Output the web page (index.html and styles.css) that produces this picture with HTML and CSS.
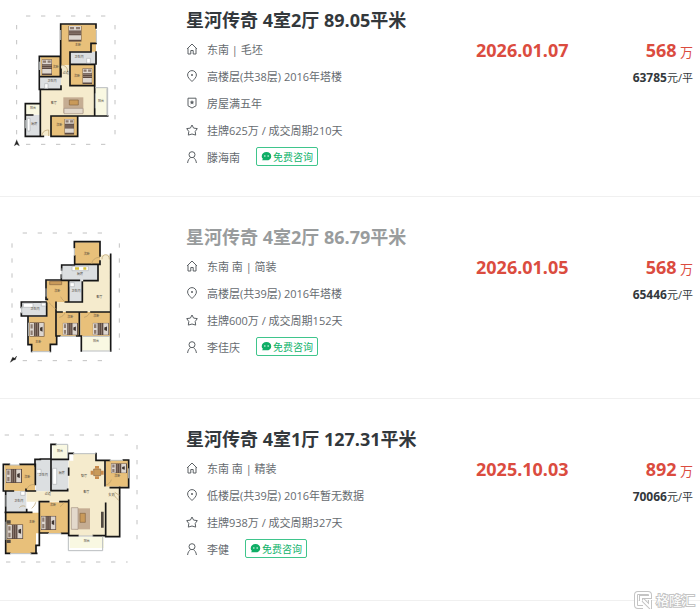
FILE: index.html
```html
<!doctype html>
<html lang="zh-CN">
    <head>
        <meta charset="utf-8" />
        <title>星河传奇 成交记录</title>
        <link rel="stylesheet" href="styles.css">
    </head>
    <body>
        <!-- Shared icons and furniture -->
        <svg class="sprites" aria-hidden="true">
            <symbol id="icon-home" viewBox="0 0 12 12">
                <path d="M1 6 6 1l5 5M2 5.3V11h2.8V7.5h2.4V11H10V5.3" />
            </symbol>
            <symbol id="icon-pin" viewBox="0 0 12 12">
                <path d="M6 11.5C3.5 9 1.6 7.3 1.6 5a4.4 4.4 0 0 1 8.8 0c0 2.3-1.9 4-4.4 6.5z" />
                <circle class="dot" cx="6" cy="5" r="1" />
            </symbol>
            <symbol id="icon-badge" viewBox="0 0 12 12">
                <path d="M2 1.2h8v7.6L6 11 2 8.8z" />
                <path class="dot" d="M6 3l.7 1.5 1.6.2-1.2 1.1.3 1.6L6 6.6l-1.4.8.3-1.6-1.2-1.1 1.6-.2z" />
            </symbol>
            <symbol id="icon-star" viewBox="0 0 12 12">
                <path d="M6 1l1.6 3.1 3.7.5-2.1 2.9.5 3.6L6 10l-3.7 1.1.5-3.6L.7 4.6l3.7-.5z" />
            </symbol>
            <symbol id="icon-user" viewBox="0 0 12 12">
                <circle cx="6" cy="3.7" r="3" />
                <path d="M1.6 12c.2-2.8 1.6-4.5 3-5.4M10.4 12c-.2-2.8-1.6-4.5-3-5.4" />
            </symbol>
            <symbol id="icon-chat" viewBox="0 0 12 12">
                <path d="M6 1c3 0 5.200 2 5.200 4.600S9 10.200 6 10.200H1.200l.9-1.800C1.200 7.700.8 6.700.8 5.600.8 3 3 1 6 1z" />
                <circle class="eye" cx="4.200" cy="5.500" r=".8" />
                <circle class="eye" cx="7.800" cy="5.500" r=".8" />
            </symbol>
            <symbol id="bed" viewBox="0 0 40 50" preserveAspectRatio="none">
                <path fill="#5c4a42" d="M0 0h40v50H0z" />
                <path fill="#ddd6cf" d="M2 1h36v14H2zM2 30h36v14H2z" />
                <path fill="#8d7b70" d="M2 18h36v3H2zM2 24h36v3H2zM5 4h12v7H5zM23 4h12v7H23z" />
            </symbol>
            <symbol id="bed-side" viewBox="0 0 50 40" preserveAspectRatio="none">
                <path fill="#5c4a42" d="M0 0h50v40H0z" />
                <path fill="#ddd6cf" d="M1 2h14v36H1zM32 2h15v36H32z" />
                <path fill="#8d7b70" d="M18 2h3v36h-3zM25 2h3v36h-3zM4 5h7v12H4zM4 23h7v12H4z" />
                <path fill="#3d332f" d="M35 15l8-3v14l-8-3z" />
            </symbol>
        </svg>

        <ul class="deal-list">
            <li class="deal">
                <svg class="plan" viewBox="0 15 450 450" role="img" aria-label="户型图">
                    <path class="ruler" d="M78 48h240M78 433h240M50 75v340M345 75v330" />
                    <path class="wood" d="M182 73h106v82h-78v40h-28zM122 170h61v60h-61zM210 195h76v63h-76zM153 348h80v60h-80z" />
                    <path class="tile" d="M210 156h76v36h-76zM122 230h61v38h-61zM77 344h43v64H77z" />
                    <path class="hall" d="M183 195h27v62h75v90H153v60h-32V268h62z" />
                    <path class="balcony" d="M77 312h43v32H77zM286 263h37v84h-37z" />
                    <path class="wall" d="M288 84V72H182v123M288 130h-15v26h-63v37M288 156v36M118 229v-60h63v61M118 230v38h65v-10M210 193h74v152M210 197v60h74M121 270v76M121 311H76v98h54M153 409h80v-60M121 347v60M78 345h20M153 348h170M153 349v58M183 208v22h-61" />
                    <path class="pane" d="M182 90v30M289 90v38M118 185v25M286 263h37v84M286 280v45M76 360v25M321 265v80" />
                    <path class="door" d="M126 408c0-13 10-18 20-18v18M183 195c12 0 20 8 20 20" />
                    <use href="#bed" x="205" y="77" width="40" height="48" />
                    <use href="#bed" x="125" y="178" width="31" height="48" />
                    <use href="#bed" x="247" y="205" width="30" height="48" />
                    <use href="#bed" x="193" y="357" width="30" height="47" />
                    <path class="rug" d="M190 292h60v47h-60z" />
                    <path class="sofa" d="M192 325h57v16h-57z" />
                    <path class="desk" d="M208 300h27v15h-27z" />
                    <path class="fixture" d="M260 175h11v14h-11zM134 251h10v14h-10zM82 355h8v38h-8z" />
                    <g class="room">
                        <text x="234" y="138">主卧</text>
                        <text x="237" y="173">卫生间</text>
                        <text x="167" y="203">次卧</text>
                        <text x="231" y="232">次卧</text>
                        <text x="197" y="223">过道</text>
                        <text x="156" y="246">卫生间</text>
                        <text x="161" y="311">客厅</text>
                        <text x="303" y="305">阳台</text>
                        <text x="99" y="327">阳台</text>
                        <text x="103" y="374">厨房</text>
                        <text x="178" y="378">次卧</text>
                    </g>
                    <path class="compass" d="M50 418v8M50 421l-7 16 7-4 8 4z" />
                </svg>
                <div class="info">
                    <h2><a href="#">星河传奇 4室2厅 89.05平米</a></h2>
                    <p><svg class="icon"><use href="#icon-home" /></svg>东南 | 毛坯</p>
                    <p><svg class="icon"><use href="#icon-pin" /></svg>高楼层(共38层) 2016年塔楼</p>
                    <p><svg class="icon"><use href="#icon-badge" /></svg>房屋满五年</p>
                    <p><svg class="icon"><use href="#icon-star" /></svg>挂牌625万 / 成交周期210天</p>
                    <p>
                        <svg class="icon"><use href="#icon-user" /></svg>滕海南
                        <button type="button" class="chat"><svg><use href="#icon-chat" /></svg>免费咨询</button>
                    </p>
                </div>
                <div class="date">2026.01.07</div>
                <div class="price">
                    <div class="total"><b>568</b> 万</div>
                    <div class="unit"><b>63785</b>元/平</div>
                </div>
            </li>

            <li class="deal">
                <svg class="plan" viewBox="0 6 450 450" role="img" aria-label="户型图">
                    <path class="ruler" d="M68 39h262M68 422h262M36 70v320M358 70v320" />
                    <path class="wood" d="M223 67h77v65h-77zM139 182h67v65h-67zM86 290h54v-43h29v125h-18v22H95v-22h-9zM170 276h68v72h-68zM241 276h90v72h-90z" />
                    <path class="tile" d="M187 136h107v45H187zM208 181h39v65h-39zM65 246h75v42H65z" />
                    <path class="hall" d="M300 104h32v171H170v-29h78v-65h46v-49h6z" />
                    <path class="balcony" d="M246 349h86v43h-86z" />
                    <path class="wall" d="M223 82V65h77v43M224 108v25h76v-10M185 150v-15h38M184 165v16h54M252 182h42v-46M142 238h-4v-58h46M206 181v65h-10M247 186v60M138 246H64v16M64 280v8h76v-38M168 247v29h18M200 276h60M273 276h57M238 276v70M84 290v84h11v20M168 276v72M168 348h12M230 348h14v45M151 394v-21h19v-25M332 103v290M246 246h-40" />
                    <path class="pane" d="M223 85v22M186 145v30M65 260v20M86 308v40M95 395h56M180 349h48M248 349h82M246 393h85M138 205v25" />
                    <path class="door" d="M306 118c0-8 4-14 11-14s11 6 11 14M147 248c10 8 12 16 23 20M300 112c-15 0-23 8-25 20M182 230c4 8 8 12 14 16M178 292c9-2 15-7 17-15M252 292c9-2 15-7 17-15" />
                    <use href="#bed-side" x="88" y="307" width="46" height="43" />
                    <use href="#bed-side" x="188" y="308" width="46" height="38" />
                    <use href="#bed-side" x="278" y="308" width="50" height="38" />
                    <path class="desk" d="M149 184h36v10h-36z" />
                    <path class="fixture" d="M216 139h49v13h-49zM70 250h29v12H70zM210 188h13v12h-13zM124 249h13v9h-13z" />
                    <path class="stove" d="M225 142h12v7h-12zM250 142h9v7h-9z" />
                    <g class="room">
                        <text x="260" y="105">次卧</text>
                        <text x="240" y="164">厨房</text>
                        <text x="172" y="216">次卧</text>
                        <text x="228" y="216">卫生间</text>
                        <text x="298" y="234">客厅</text>
                        <text x="105" y="270">卫生间</text>
                        <text x="211" y="294">次卧</text>
                        <text x="289" y="292">次卧</text>
                        <text x="115" y="370">主卧</text>
                        <text x="288" y="366">阳台</text>
                    </g>
                    <path class="compass" d="M31 427l7-15 6 3 6-7-4 11-5 1z" />
                </svg>
                <div class="info">
                    <h2><a href="#" class="visited">星河传奇 4室2厅 86.79平米</a></h2>
                    <p><svg class="icon"><use href="#icon-home" /></svg>东南 南 | 简装</p>
                    <p><svg class="icon"><use href="#icon-pin" /></svg>高楼层(共39层) 2016年塔楼</p>
                    <p><svg class="icon"><use href="#icon-star" /></svg>挂牌600万 / 成交周期152天</p>
                    <p>
                        <svg class="icon"><use href="#icon-user" /></svg>李佳庆
                        <button type="button" class="chat"><svg><use href="#icon-chat" /></svg>免费咨询</button>
                    </p>
                </div>
                <div class="date">2026.01.05</div>
                <div class="price">
                    <div class="total"><b>568</b> 万</div>
                    <div class="unit"><b>65446</b>元/平</div>
                </div>
            </li>

            <li class="deal">
                <svg class="plan" viewBox="0 -3 450 450" role="img" aria-label="户型图">
                    <path class="ruler" d="M14 30h370M18 411h365M411 60v313" />
                    <path class="wood" d="M14 120h91v79H14zM18 263h99v62h-9v60H18zM120 232h85v92h-85zM318 105h66v80h-66z" />
                    <path class="tile" d="M107 103h46v96h-46zM155 103h50v93h-50zM18 199h61v63H18z" />
                    <path class="hall" d="M220 86h68v20h27v79h43v149H206V230H80v-31h126v-92h14z" />
                    <path class="balcony" d="M158 60h48v42h-48zM209 335h103v34H209z" />
                    <path class="wall" d="M28 118H10v80h30M60 118h46v60M106 198H78v-5M121 103h-16v20M121 102h32v95h50v-4M153 102V58h14M155 103h50v-18h15M180 197h-27v-28M288 86v20h27v76M315 106h14M370 105h16v83h-55M359 187v148h-42V235M206 130v20M206 226v106h28M280 332h37M17 198v187h12M94 385h16M16 262h64v-8M118 230v94h26M118 230h28M180 230h25M118 325v36h-10v24M80 262h15M185 325h20" />
                    <path class="pane" d="M28 120h32M14 140v36M167 58h36v42M219 86h68M329 106h40M205 335v42h103v-42M386 130v30M18 210v35M18 290v55M144 326h40M235 333h45M30 386h64" />
                    <path class="door" d="M81 192c2-8 10-14 23-14M342 204c0 10 6 14 14 22M344 202c6 3 10 8 15 8M58 248c4-5 10-7 18-4M95 250c5-4 10-10 12-18M180 245c5-4 10-8 12-14M318 180c8-2 14-8 16-16" />
                    <use href="#bed-side" x="18" y="131" width="48" height="43" />
                    <use href="#bed-side" x="21" y="298" width="49" height="44" />
                    <use href="#bed-side" x="123" y="272" width="46" height="43" />
                    <use href="#bed-side" x="333" y="115" width="48" height="30" />
                    <path class="rug" d="M224 250h46v63h-46z" />
                    <path class="sofa" d="M214 248h20v65h-20z" />
                    <path class="desk" d="M240 265h16v27h-16zM281 132h21v20h-21z" />
                    <path class="chair" d="M272 137h8v12h-8zM303 137h8v12h-8zM285 123h12v8h-12zM285 154h12v8h-12z" />
                    <path class="tv" d="M303 260h8v48h-8zM20 286h12v10H20zM20 344h12v10H20z" />
                    <path class="fixture" d="M110 133h13v12h-13zM158 130h12v48h-12zM62 199h13v12H62z" />
                    <g class="room">
                        <text x="180" y="80">阳台</text>
                        <text x="82" y="158">次卧</text>
                        <text x="130" y="153">卫生间</text>
                        <text x="185" y="148">厨房</text>
                        <text x="252" y="155">餐厅</text>
                        <text x="352" y="157">次卧</text>
                        <text x="259" y="204">客厅</text>
                        <text x="143" y="211">过道</text>
                        <text x="56" y="231">卫生间</text>
                        <text x="159" y="244">次卧</text>
                        <text x="96" y="295">主卧</text>
                        <text x="334" y="212">玄关</text>
                        <text x="260" y="351">阳台</text>
                    </g>
                </svg>
                <div class="info">
                    <h2><a href="#">星河传奇 4室1厅 127.31平米</a></h2>
                    <p><svg class="icon"><use href="#icon-home" /></svg>东南 南 | 精装</p>
                    <p><svg class="icon"><use href="#icon-pin" /></svg>低楼层(共39层) 2016年暂无数据</p>
                    <p><svg class="icon"><use href="#icon-star" /></svg>挂牌938万 / 成交周期327天</p>
                    <p>
                        <svg class="icon"><use href="#icon-user" /></svg>李健
                        <button type="button" class="chat"><svg><use href="#icon-chat" /></svg>免费咨询</button>
                    </p>
                </div>
                <div class="date">2025.10.03</div>
                <div class="price">
                    <div class="total"><b>892</b> 万</div>
                    <div class="unit"><b>70066</b>元/平</div>
                </div>
            </li>
        </ul>

        <div class="watermark">
            <svg viewBox="0 0 18 18" aria-hidden="true">
                <path class="edge" d="M9 16H4a2 2 0 0 1-2-2V4a2 2 0 0 1 2-2h10a2 2 0 0 1 2 2v2H7v4M9 9l7 7V9" />
                <path class="fill" d="M9 16H4a2 2 0 0 1-2-2V4a2 2 0 0 1 2-2h10a2 2 0 0 1 2 2v2H7v4M9 9l7 7V9" />
            </svg>
            <span>格隆汇</span>
        </div>
    </body>
</html>
```
FILE: styles.css
```css
body {
    margin: 0;
    background: #fff;
    color: #666b70;
    font-family: "Open Sans", "Noto Sans CJK SC", sans-serif;
    font-size: 11px;
    position: relative;
    min-height: 100vh;
}
.sprites {
    display: none;
}
.deal-list {
    list-style: none;
    margin: 0;
    padding: 0;
}
.deal {
    display: grid;
    grid-template-columns: 150px 1fr 91px 126px;
    align-items: start;
    padding: 25px 7px 26px 0;
    border-bottom: 1px solid #f0f0f0;
}
.deal:first-child {
    padding-top: 5px;
}

/* Text column */
.info {
    padding-left: 36px;
}
.info h2 {
    margin: 0;
    font-size: 18px;
    line-height: 30px;
    font-weight: 700;
    white-space: nowrap;
}
.info a {
    color: #33383c;
    text-decoration: none;
}
.info a.visited {
    color: #999c9d;
}
.info p {
    display: flex;
    align-items: center;
    height: 27px;
    margin: 0;
    white-space: nowrap;
}
.icon {
    width: 12px;
    height: 12px;
    margin-right: 9px;
    fill: none;
    stroke: #5c6165;
}
.dot {
    fill: #5c6165;
    stroke: none;
}
.chat {
    display: flex;
    align-items: center;
    gap: 1px;
    height: 19px;
    margin-left: 16px;
    padding: 0 4px;
    border: 1px solid #3fc58c;
    border-radius: 2px;
    background: #fff;
    color: #0fb36b;
    font-family: inherit;
    font-size: 10px;
    cursor: pointer;
}
.chat svg {
    width: 11px;
    height: 11px;
    fill: #0fae66;
}
.eye {
    fill: #fff;
}

/* Date and price */
.date,
.total {
    margin-top: 30px;
    line-height: 30px;
    color: #db4c3f;
    white-space: nowrap;
}
.date,
.total b {
    font-family: "Noto Sans", sans-serif;
    font-size: 18px;
    font-weight: 700;
}
.price {
    text-align: right;
}
.total {
    font-size: 13px;
}
.unit {
    line-height: 22px;
    color: #33383c;
}
.unit b {
    font-size: 12px;
}

/* Floor plans */
.plan {
    display: block;
    width: 150px;
    height: 150px;
}
.ruler {
    fill: none;
    stroke: #c2c2c2;
    stroke-width: 3;
    stroke-dasharray: 13 32;
}
.wood {
    fill: #e8c07a;
}
.tile {
    fill: #dcdfe1;
}
.hall {
    fill: #f5ebcd;
}
.balcony {
    fill: #f9f8e2;
}
.wall {
    fill: none;
    stroke: #161616;
    stroke-width: 5;
    stroke-linecap: square;
}
.pane {
    fill: none;
    stroke: #b9bdbf;
    stroke-width: 3;
}
.door {
    fill: none;
    stroke: #b59a68;
    stroke-width: 2;
}
.rug {
    fill: #c5ad93;
}
.sofa {
    fill: #e3d9cc;
    stroke: #a39184;
    stroke-width: 2;
}
.desk {
    fill: #c99a5a;
    stroke: #866744;
    stroke-width: 2;
}
.chair {
    fill: #c98b4c;
}
.tv {
    fill: #524a42;
}
.fixture {
    fill: #fff;
    stroke: #b0b4b6;
    stroke-width: 2;
}
.stove {
    fill: #d8c23c;
}
.room {
    fill: #4b4438;
    font-size: 9px;
    text-anchor: middle;
}
.compass {
    fill: #222;
    stroke: #222;
}

/* Site mark over the bottom right corner */
.watermark {
    position: absolute;
    right: 5px;
    bottom: 5px;
    display: flex;
    align-items: center;
    gap: 4px;
    color: #fff;
    font-size: 13px;
    line-height: 20px;
    -webkit-text-stroke: 2px #c4c4c4;
    paint-order: stroke fill;
}
.watermark svg {
    width: 18px;
    height: 18px;
    fill: none;
}
.edge {
    stroke: #c4c4c4;
    stroke-width: 4;
}
.fill {
    stroke: #fff;
    stroke-width: 2;
}
```
